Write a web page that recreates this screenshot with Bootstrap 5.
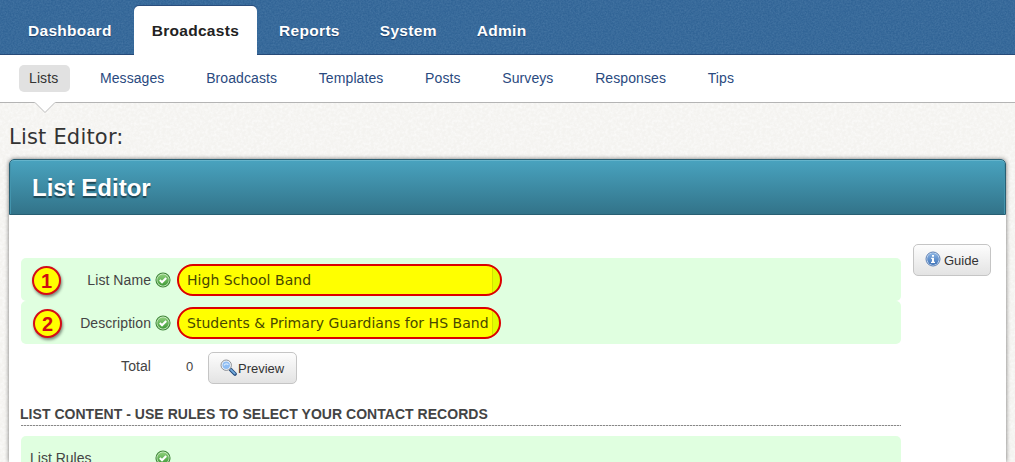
<!DOCTYPE html>
<html lang="en">
<head>
<meta charset="utf-8">
<meta name="viewport" content="width=device-width, initial-scale=1">
<title>List Editor</title>
<link href="https://cdn.jsdelivr.net/npm/bootstrap@5.3.0/dist/css/bootstrap.min.css" rel="stylesheet">
<style>
body{font-family:"Liberation Sans",Arial,sans-serif;font-size:14px;line-height:20px;color:#444;height:462px;overflow:hidden;
  background:#f4f3f0 url("data:image/svg+xml,%3Csvg xmlns='http://www.w3.org/2000/svg' width='200' height='200'%3E%3Cfilter id='n'%3E%3CfeTurbulence type='fractalNoise' baseFrequency='.35' numOctaves='3' stitchTiles='stitch'/%3E%3CfeColorMatrix values='0 0 0 0 1 0 0 0 0 1 0 0 0 0 1 1.2 0 0 0 -.45'/%3E%3C/filter%3E%3Crect width='200' height='200' filter='url(%23n)'/%3E%3C/svg%3E")}
.topbar{height:55px;padding:6px 0 0 10px;gap:4px;background:#316496 url("data:image/svg+xml,%3Csvg xmlns='http://www.w3.org/2000/svg' width='200' height='55'%3E%3Cfilter id='n'%3E%3CfeTurbulence type='fractalNoise' baseFrequency='.6' numOctaves='2' stitchTiles='stitch'/%3E%3CfeColorMatrix values='0 0 0 0 .3 0 0 0 0 .5 0 0 0 0 .7 .3 0 0 0 -.08'/%3E%3C/filter%3E%3Crect width='200' height='55' filter='url(%23n)'/%3E%3C/svg%3E");box-shadow:inset 0 -1px #264a78}
.topbar .nav-link{font-size:15.5px;font-weight:700;letter-spacing:.3px;color:#fff;padding:15px 18px 14px;line-height:20px;text-shadow:0 1px 1px #1b3c66}
.topbar .nav-link.active{background:#fff;color:#222;border-radius:5px 5px 0 0;text-shadow:none;box-shadow:0 -1px #2a4d7c}
.subbar{height:48px;padding:10px 0 0 19px;gap:21.7px;background:#fff;border-bottom:1px solid #b4b4b4}
.subbar .nav-link{color:#2a4a80;padding:3px 10px 4px;border-radius:5px;position:relative;letter-spacing:.09px}
.subbar .nav-link.active{background:#e1e1e1;color:#333;padding-right:12px;margin-right:-2px}
.notch{position:absolute;left:15px;top:37px;display:block}
h1{font:21px/26px "DejaVu Sans",Verdana,sans-serif;letter-spacing:.2px;color:#333;margin:21px 0 0 9px}
.panel{margin:9px 9px 0;height:303px;background:#fff;border-radius:5px 5px 0 0;box-shadow:0 0 4px rgba(0,0,0,.55)}
.panel-head{height:56px;padding:2px 22px 0;border:1px solid #285f73;border-radius:5px 5px 0 0;background:linear-gradient(#49a3bf,#327389);box-shadow:inset 0 1px #65b4cb,inset 1px 0 #4394ad,inset -1px 0 #4394ad}
.panel-head h2{font-size:24px;line-height:28px;font-weight:700;color:#fff;text-shadow:0 2px 1px #1d4654}
.panel-body{padding:29px 15px 0 12px}
.fields{width:880px;padding-top:14px}
.field-row{height:43px;border-radius:5px;background:#e0ffe0;padding-left:11px}
.step{width:29px;height:29px;margin-top:2px;border:2.5px solid #d50c17;border-radius:50%;background:#ff0;color:#d00d10;font-size:20px;font-weight:700;box-shadow:1px 2px 3px rgba(0,0,0,.45)}
.field-label{text-align:right;letter-spacing:.07px}
.check{margin-left:4px;margin-right:-1px}
.value-box{width:325px;height:32px;margin-left:7px;border:2px solid #dc0000;border-radius:16px;background:linear-gradient(90deg,transparent 313px,#d4e000 313px,#d4e000 314px,#e1ff00 314px) #ff0;padding:0 0 0 8px;font:14px/28px "DejaVu Sans",Verdana,sans-serif;color:#484800}
.value-box span{display:block;width:302px;overflow:hidden;white-space:nowrap;letter-spacing:.04px}
.tool-btn{font-size:13px;line-height:20px;height:32px;border:1px solid #c5c5c5;border-radius:5px;color:#333;background:linear-gradient(#fdfdfd,#e3e3e3);padding:1px 0 0}
.section-title{font-size:14px;line-height:20px;font-weight:700;letter-spacing:.035px;color:#444;margin:20px 0 0 -1px;white-space:nowrap}
.dash{height:1px;margin-top:1px;background:repeating-linear-gradient(90deg,#888 0 2px,#ddd 2px 3px)}
</style>
</head>
<body>
<svg width="0" height="0" class="position-absolute">
  <defs>
    <linearGradient id="gr" x2="0" y2="1"><stop stop-color="#8fd07c"/><stop offset="1" stop-color="#3f9a38"/></linearGradient>
    <symbol id="ok" viewBox="0 0 16 16"><circle cx="8" cy="8" r="7" fill="#d9f2d2" stroke="#3f8738" stroke-width="1.1"/><circle cx="8" cy="8" r="5.8" fill="url(#gr)"/><path d="M4.8 8.1 7 10.2 11.2 5.9" fill="none" stroke="#fff" stroke-width="2.1"/></symbol>
  </defs>
</svg>
<nav class="nav topbar flex-nowrap">
  <a class="nav-link" href="#">Dashboard</a>
  <a class="nav-link active" href="#">Broadcasts</a>
  <a class="nav-link" href="#">Reports</a>
  <a class="nav-link" href="#">System</a>
  <a class="nav-link" href="#">Admin</a>
</nav>
<nav class="nav subbar flex-nowrap align-items-start">
  <a class="nav-link active" href="#">Lists<svg class="notch" width="22" height="12" viewBox="0 0 22 12"><path d="M0 0H22L21 .5 11 10.5 1 .5Z" fill="#fff"/><path d="M1 .5 11 10.5 21 .5" fill="none" stroke="#bbb"/></svg></a>
  <a class="nav-link" href="#">Messages</a>
  <a class="nav-link" href="#">Broadcasts</a>
  <a class="nav-link" href="#">Templates</a>
  <a class="nav-link" href="#">Posts</a>
  <a class="nav-link" href="#">Surveys</a>
  <a class="nav-link" href="#">Responses</a>
  <a class="nav-link" href="#">Tips</a>
</nav>
<main>
  <h1>List Editor:</h1>
  <section class="panel">
    <div class="panel-head d-flex align-items-center"><h2 class="m-0">List Editor</h2></div>
    <div class="panel-body d-flex align-items-start">
      <div class="fields flex-shrink-0">
        <div class="field-row d-flex align-items-center">
          <span class="step d-flex align-items-center justify-content-center">1</span>
          <span class="field-label" style="width:90px">List Name</span>
          <svg class="check" width="16" height="16"><use href="#ok"/></svg>
          <div class="value-box"><span>High School Band</span></div>
        </div>
        <div class="field-row d-flex align-items-center">
          <span class="step d-flex align-items-center justify-content-center" style="margin-left:1px">2</span>
          <span class="field-label" style="width:89px">Description</span>
          <svg class="check" width="16" height="16"><use href="#ok"/></svg>
          <div class="value-box" style="width:324px"><span>Students &amp; Primary Guardians for HS Band</span></div>
        </div>
        <div class="d-flex align-items-start" style="padding-top:8px">
          <span class="field-label" style="width:130px;padding-top:4px">Total</span>
          <span style="width:57px;padding:5px 0 0 35px;font-size:13px">0</span>
          <button class="btn tool-btn d-flex align-items-center" style="width:89px;padding-left:11px">
            <svg width="18" height="18" viewBox="0 0 18 18" style="margin-bottom:2px"><path d="M10.5 10.5 15 15" stroke="#244b7e" stroke-width="3.8" stroke-linecap="round"/><path d="M11 10.8 14.8 14.6" stroke="#75ade0" stroke-width="1.8" stroke-linecap="round"/><circle cx="6.2" cy="6.2" r="5.2" fill="#eef4fb" stroke="#8d9095"/><circle cx="6.2" cy="6.2" r="3.7" fill="#8fbdf3"/><path d="M4 6.4Q6 3.8 8.4 5.8" stroke="#d5e8fd" stroke-width="1.3" fill="none"/></svg>
            Preview
          </button>
        </div>
        <h3 class="section-title">LIST CONTENT - USE RULES TO SELECT YOUR CONTACT RECORDS</h3>
        <div class="dash"></div>
        <div class="field-row d-flex align-items-center" style="margin-top:10px;padding-left:9px">
          <span style="width:125px;padding-top:1px">List Rules</span>
          <svg width="16" height="16"><use href="#ok"/></svg>
        </div>
      </div>
      <button class="btn tool-btn d-flex align-items-center" style="width:78px;margin-left:12px;padding-left:11px">
        <svg width="16" height="16" viewBox="0 0 16 16" style="margin:0 3px 3px 0"><defs><linearGradient id="bl" x2="0" y2="1"><stop stop-color="#8ab3e2"/><stop offset="1" stop-color="#3f73b8"/></linearGradient></defs><circle cx="8" cy="8" r="7" fill="#d5e4f5" stroke="#5a7fb5"/><circle cx="8" cy="8" r="5.9" fill="url(#bl)"/><path d="M7 4h2v1.7H7ZM6.2 6.8H9v4h1V12H6v-1.2h1V8h-.8Z" fill="#fff"/></svg>
        Guide
      </button>
    </div>
  </section>
</main>
<script src="https://cdn.jsdelivr.net/npm/bootstrap@5.3.0/dist/js/bootstrap.bundle.min.js"></script>
</body>
</html>
